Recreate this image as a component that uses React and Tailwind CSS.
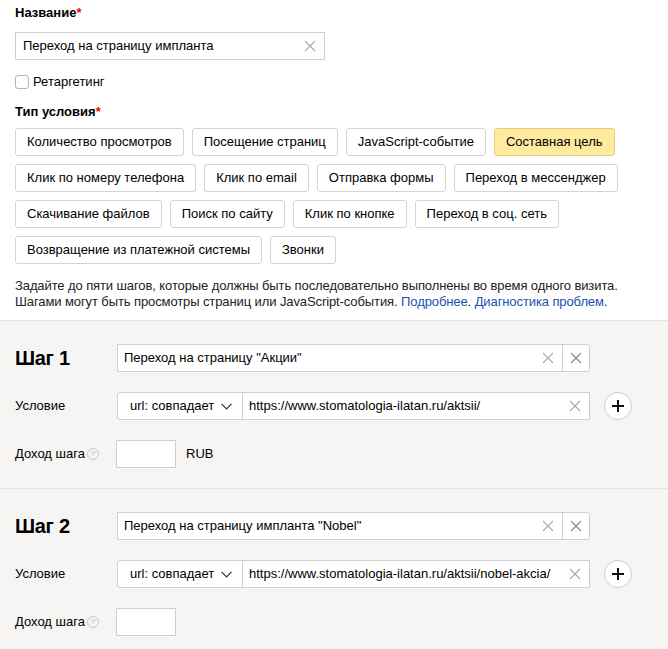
import React from "react";

const XIcon = ({ className = "" }) => (
  <svg width="12" height="12" viewBox="0 0 12 12" className={className}>
    <path d="M1 1L11 11M11 1L1 11" stroke="currentColor" strokeWidth="1.1" fill="none" />
  </svg>
);

const Chevron = () => (
  <svg width="11" height="7" viewBox="0 0 11 7">
    <path d="M0.5 0.8L5.5 5.8L10.5 0.8" stroke="#333" strokeWidth="1.2" fill="none" />
  </svg>
);

const Btn = ({ children, active }) => (
  <div
    className={
      "h-[28px] px-[11px] flex items-center rounded-[3px] border text-[13px] " +
      (active ? "bg-[#ffeba0] border-[#e6cf7e]" : "bg-white border-[#d4d4d4]")
    }
  >
    {children}
  </div>
);

const Step = ({ n, name, url, rub }) => (
  <div className="border-t border-[#e3e2e0] pt-[23px] pb-[20px] px-[15px] flex flex-col gap-[20px]">
    <div className="flex items-center">
      <div className="w-[102px] text-[20px] font-bold leading-none tracking-[-0.3px]">Шаг {n}</div>
      <div className="flex w-[473px] h-[28px] bg-white border border-[#cfcfcf] rounded-r-[3px]">
        <div className="flex-1 flex items-center pl-[6px] pr-[8px]">
          <span className="flex-1">{name}</span>
          <XIcon className="text-[#aaa]" />
        </div>
        <div className="w-[27px] border-l border-[#cfcfcf] flex items-center justify-center text-[#888]">
          <XIcon />
        </div>
      </div>
    </div>
    <div className="flex items-center">
      <div className="w-[102px]">Условие</div>
      <div className="flex w-[473px] h-[28px]">
        <div className="w-[126px] shrink-0 bg-white border border-[#cfcfcf] rounded-l-[3px] flex items-center pl-[12px] pr-[10px] justify-between">
          <span>url: совпадает</span>
          <Chevron />
        </div>
        <div className="flex-1 bg-white border border-l-0 border-[#cfcfcf] flex items-center pl-[6px] pr-[8px]">
          <span className="flex-1">{url}</span>
          <XIcon className="text-[#aaa]" />
        </div>
      </div>
      <div className="ml-[14px] w-[28px] h-[28px] rounded-full border border-[#cfcfcf] bg-white flex items-center justify-center">
        <svg width="14" height="14" viewBox="0 0 14 14">
          <path d="M7 1V13M1 7H13" stroke="#111" strokeWidth="2" />
        </svg>
      </div>
    </div>
    <div className="flex items-center">
      <div className="w-[101px] flex items-center">
        <span>Доход шага</span>
        <span className="ml-[2px] w-[12px] h-[12px] rounded-full border border-[#c8c8c8] text-[#bbb] text-[8px] flex items-center justify-center leading-none">?</span>
      </div>
      <div className="w-[60px] h-[28px] bg-white border border-[#cfcfcf]" />
      {rub && <span className="ml-[10px]">RUB</span>}
    </div>
  </div>
);

export default function App() {
  return (
    <div className="w-[668px] h-[649px] overflow-hidden bg-white text-[13px] text-black font-['Liberation_Sans',Arial,sans-serif]">
      <div className="px-[15px] pt-[5px] pb-[10px]">
        <div className="font-bold leading-[16px]">
          Название<span className="text-[#e00]">*</span>
        </div>
        <div className="mt-[11px] w-[310px] h-[28px] border border-[#d0d0d0] flex items-center pl-[7px] pr-[8px]">
          <span className="flex-1">Переход на страницу импланта</span>
          <XIcon className="text-[#aaa]" />
        </div>
        <div className="mt-[12px] h-[20px] flex items-center">
          <div className="w-[14px] h-[14px] rounded-[3px] border border-[#b5b5b5] bg-white" />
          <span className="ml-[4px]">Ретаргетинг</span>
        </div>
        <div className="mt-[12px] font-bold leading-[16px]">
          Тип условия<span className="text-[#e00]">*</span>
        </div>
        <div className="mt-[8px] flex flex-col gap-[8px]">
          <div className="flex gap-[8px]">
            <Btn>Количество просмотров</Btn>
            <Btn>Посещение страниц</Btn>
            <Btn>JavaScript-событие</Btn>
            <Btn active>Составная цель</Btn>
          </div>
          <div className="flex gap-[8px]">
            <Btn>Клик по номеру телефона</Btn>
            <Btn>Клик по email</Btn>
            <Btn>Отправка формы</Btn>
            <Btn>Переход в мессенджер</Btn>
          </div>
          <div className="flex gap-[8px]">
            <Btn>Скачивание файлов</Btn>
            <Btn>Поиск по сайту</Btn>
            <Btn>Клик по кнопке</Btn>
            <Btn>Переход в соц. сеть</Btn>
          </div>
          <div className="flex gap-[8px]">
            <Btn>Возвращение из платежной системы</Btn>
            <Btn>Звонки</Btn>
          </div>
        </div>
        <div className="mt-[14px] leading-[16px] text-[#222] tracking-[-0.1px]">
          Задайте до пяти шагов, которые должны быть последовательно выполнены во время одного визита.
          <br />
          Шагами могут быть просмотры страниц или JavaScript-события.{" "}
          <span className="text-[#1a4fb5]">Подробнее</span>.{" "}
          <span className="text-[#1a4fb5]">Диагностика проблем</span>.
        </div>
      </div>
      <div className="bg-[#f6f5f3]">
        <Step n={1} name={'Переход на страницу "Акции"'} url="https://www.stomatologia-ilatan.ru/aktsii/" rub />
        <Step n={2} name={'Переход на страницу импланта "Nobel"'} url="https://www.stomatologia-ilatan.ru/aktsii/nobel-akcia/" />
      </div>
    </div>
  );
}
